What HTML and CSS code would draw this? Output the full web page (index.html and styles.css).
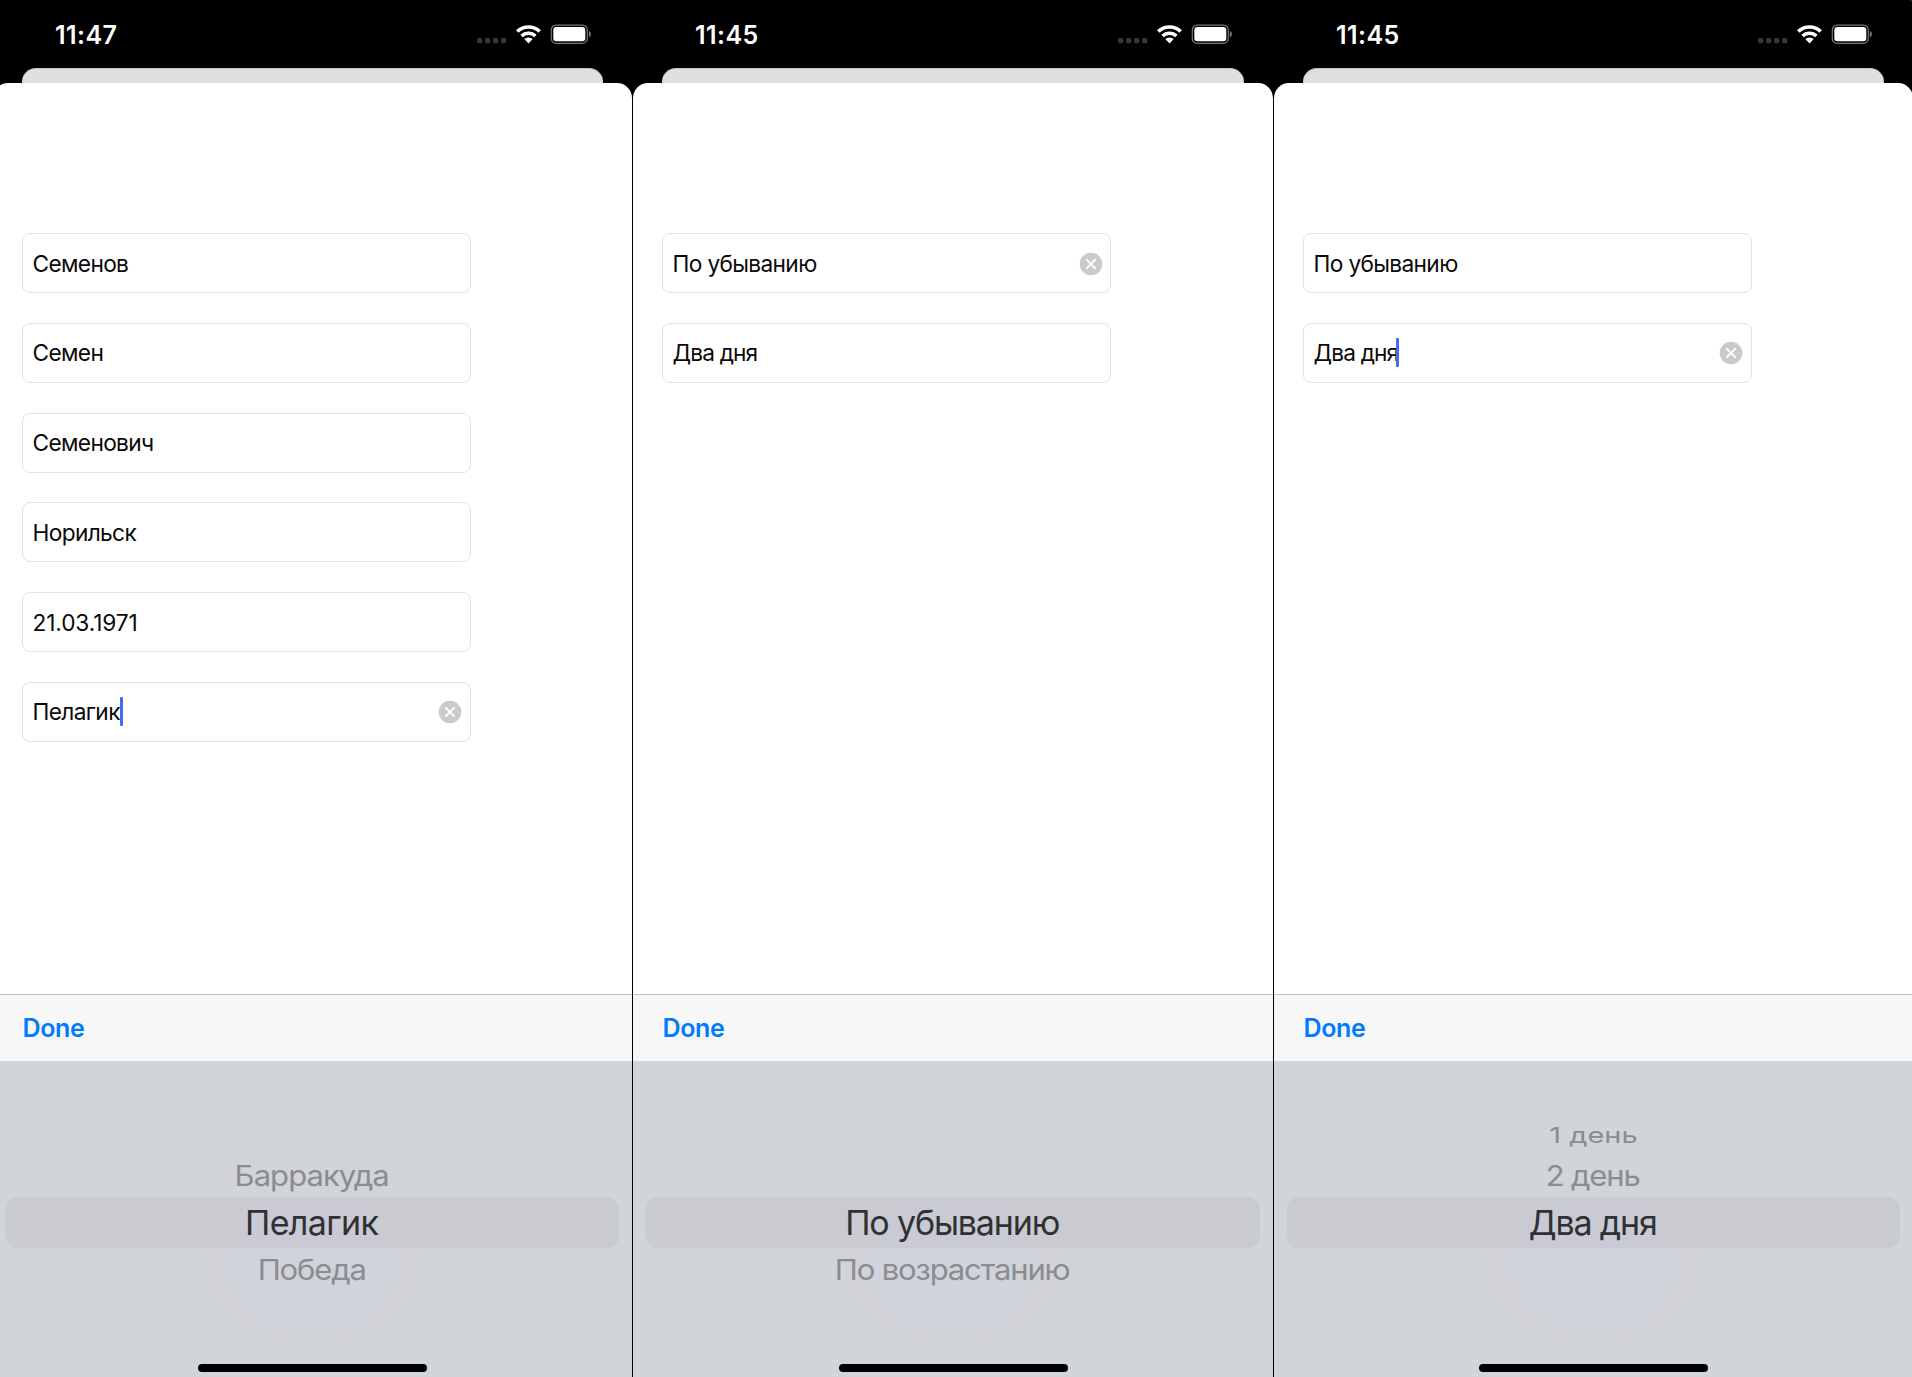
FILE: index.html
```
<!DOCTYPE html>
<html lang="ru">
<head>
<meta charset="utf-8">
<title>Формы</title>
<link rel="stylesheet" href="styles.css">
</head>
<body>
<svg width="0" height="0" class="defs">
  <symbol id="status" viewBox="0 0 116 20">
    <g fill="#373737"><rect x="0" y="14" width="5.2" height="5.2" rx="1.4"/><rect x="8" y="14" width="5.2" height="5.2" rx="1.4"/><rect x="16" y="14" width="5.2" height="5.2" rx="1.4"/><rect x="24" y="14" width="5.2" height="5.2" rx="1.4"/></g>
    <g fill="none" stroke="#fff" stroke-width="3.5"><path d="M40.3 7.6a16 16 0 0 1 22.4 0"/><path d="M44.6 12a9.8 9.8 0 0 1 13.8 0"/></g>
    <path fill="#fff" d="M47.3 15.1a6 6 0 0 1 8.4 0L51.5 19.4z"/>
    <rect x="74.3" y="1.1" width="36" height="18.2" rx="4.8" fill="none" stroke="#77757a" stroke-width="1.2"/>
    <rect x="76.3" y="3.1" width="32" height="14.2" rx="3" fill="#fff"/>
    <path d="M111.9 7v6.2c2.7-1 2.7-5.2 0-6.2z" fill="#77757a"/>
  </symbol>
  <symbol id="clear" viewBox="0 0 24 24">
    <circle cx="12" cy="12" r="11.3" fill="#cacaca"/>
    <path d="M7.9 7.9l8.2 8.2M16.1 7.9l-8.2 8.2" stroke="#fff" stroke-width="2" stroke-linecap="round"/>
  </symbol>
</svg>
<main class="screens">
  <section class="screen first">
    <header class="status"><span class="time">11:47</span><svg class="indicators"><use href="#status"/></svg></header>
    <div class="back-sheet"></div>
    <div class="sheet">
      <form class="fields">
        <div class="field"><span>Семенов</span></div>
        <div class="field"><span>Семен</span></div>
        <div class="field"><span>Семенович</span></div>
        <div class="field"><span>Норильск</span></div>
        <div class="field"><span class="date">21.03.1971</span></div>
        <div class="field"><span>Пелагик</span><i class="caret"></i><svg class="clear"><use href="#clear"/></svg></div>
      </form>
      <div class="toolbar"><span>Done</span></div>
      <div class="picker">
        <div class="wheel">
          <div class="row before"><span class="snug">Барракуда</span></div>
          <div class="row selected"><span class="loose">Пелагик</span></div>
          <div class="row after"><span>Победа</span></div>
        </div>
        <div class="home"></div>
      </div>
    </div>
  </section>
  <section class="screen second">
    <header class="status"><span class="time">11:45</span><svg class="indicators"><use href="#status"/></svg></header>
    <div class="back-sheet"></div>
    <div class="sheet">
      <form class="fields">
        <div class="field"><span>По убыванию</span><svg class="clear"><use href="#clear"/></svg></div>
        <div class="field"><span class="days">Два дня</span></div>
      </form>
      <div class="toolbar"><span>Done</span></div>
      <div class="picker">
        <div class="wheel">
          <div class="row selected"><span>По убыванию</span></div>
          <div class="row after"><span>По возрастанию</span></div>
        </div>
        <div class="home"></div>
      </div>
    </div>
  </section>
  <section class="screen third">
    <header class="status"><span class="time">11:45</span><svg class="indicators"><use href="#status"/></svg></header>
    <div class="back-sheet"></div>
    <div class="sheet">
      <form class="fields">
        <div class="field"><span>По убыванию</span></div>
        <div class="field"><span class="days">Два дня</span><i class="caret"></i><svg class="clear"><use href="#clear"/></svg></div>
      </form>
      <div class="toolbar"><span>Done</span></div>
      <div class="picker">
        <div class="wheel">
          <div class="row far"><span>1 день</span></div>
          <div class="row before"><span>2 день</span></div>
          <div class="row selected"><span>Два дня</span></div>
        </div>
        <div class="home"></div>
      </div>
    </div>
  </section>
</main>
</body>
</html>
```
FILE: styles.css
```
* { box-sizing: border-box; }
body {
  margin: 0;
  background: #000;
  font-family: Inter, "Liberation Sans", sans-serif;
  overflow: hidden;
}
.defs { position: absolute; }
.screens {
  display: flex;
  width: 1912px;
  height: 1377px;
  overflow: hidden;
}
.screen {
  flex: none;
  display: flex;
  flex-direction: column;
  width: 640px;
  height: 1377px;
  border-left: 1px solid #000;
}
.first { margin-left: -8px; }
.second { width: 641px; }
.status {
  display: flex;
  justify-content: space-between;
  align-items: flex-start;
  height: 68px;
  padding: 19px 39px 0 62px;
}
.third .status {
  background: radial-gradient(circle at 0 100%, transparent 8.5px, #4a4a4a 11px) top right / 8px 8px no-repeat;
}
.time {
  color: #fff;
  font-size: 25px;
  line-height: 32px;
  font-weight: 600;
  letter-spacing: 0.45px;
}
.indicators { width: 116px; height: 20px; margin-top: 5px; }
.back-sheet {
  height: 15px;
  margin: 0 29px;
  background: #dfdfdf;
  border-top: 1px solid #c4c4c4;
  border-radius: 14px 14px 0 0;
}
.sheet {
  flex: 1;
  display: flex;
  flex-direction: column;
  background: #fff;
  border-radius: 15px 15px 0 0;
}
.fields {
  flex: 1;
  display: flex;
  flex-direction: column;
  gap: 29.8px;
  padding: 150px 0 0 29px;
}
.field {
  display: flex;
  align-items: center;
  width: 449px;
  height: 60px;
  padding: 0 8px 0 9.5px;
  border: 1px solid #e2e2e2;
  border-radius: 8px;
  font-size: 22.7px;
  letter-spacing: -0.65px;
  color: #0a0a0a;
}
.second .field { padding-right: 7px; }
.date { letter-spacing: -0.12px; }
.days { letter-spacing: -0.85px; }
.caret {
  width: 3px;
  height: 29px;
  margin-bottom: 1px;
  border-radius: 1px;
  background: #426bf2;
}
.days + .caret { margin-left: -2px; }
.clear { width: 24px; height: 24px; margin: 1px 0 0 auto; }
.toolbar {
  height: 67px;
  padding: 16px 0 0 29.4px;
  border-top: 1px solid #c1c1c3;
  background: #f7f7f7;
  color: #007aff;
  font-size: 25px;
  line-height: 34px;
  font-weight: 600;
  letter-spacing: -0.3px;
}
.picker {
  display: flex;
  flex-direction: column;
  height: 316px;
  background:
    linear-gradient(#d1d4d9, #d1d4d9) top / 100% 136px no-repeat,
    radial-gradient(ellipse 88px 78px at 319px 200px, #d0d3dc 85%, transparent 100%),
    radial-gradient(ellipse 112px 90px at 319px 200px, #d2d3d8 90%, transparent 100%),
    #d1d4d9;
}
.wheel {
  display: grid;
  grid-template-rows: 36px 46px 51px 46px;
  padding: 54px 13px 0;
  height: 303px;
}
.row {
  display: grid;
  place-items: center;
  white-space: nowrap;
  color: #8b8c8f;
  letter-spacing: -1.15px;
}
.row span { display: block; margin-right: 1.6px; }
.row .snug { letter-spacing: -0.95px; }
.row .loose { letter-spacing: -0.6px; }
.row.far { grid-row: 1; font-size: 29px; letter-spacing: 0; }
.before { grid-row: 2; font-size: 31px; }
.selected {
  grid-row: 3;
  border-radius: 12px;
  background: rgba(175, 172, 174, 0.2);
  color: #303133;
  font-size: 34px;
}
.after { grid-row: 4; font-size: 31px; }
.before span { transform: translateY(1px) scaleY(0.92); }
.after span { transform: translateY(-2px) scaleY(0.92); }
.far span { margin-right: 0; transform: translateY(2px) scaleY(0.75); }
.home {
  width: 229px;
  height: 8px;
  margin: 0 auto;
  border-radius: 4px;
  background: #000;
}
```
